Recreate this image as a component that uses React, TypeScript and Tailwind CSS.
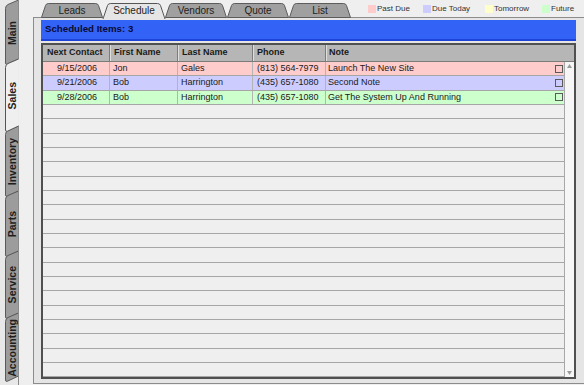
import React from "react";

type Row = {
  date: string;
  first: string;
  last: string;
  phone: string;
  note: string;
  bg: string;
};

const rows: Row[] = [
  { date: "9/15/2006", first: "Jon", last: "Gales", phone: "(813) 564-7979", note: "Launch The New Site", bg: "bg-[#ffcccc]" },
  { date: "9/21/2006", first: "Bob", last: "Harrington", phone: "(435) 657-1080", note: "Second Note", bg: "bg-[#ccccff]" },
  { date: "9/28/2006", first: "Bob", last: "Harrington", phone: "(435) 657-1080", note: "Get The System Up And Running", bg: "bg-[#ccffcc]" },
];

const EMPTY_ROWS = 19;

// left side tabs: boundaries on the y axis
const sideTabs = ["Main", "Sales", "Inventory", "Parts", "Service", "Accounting"];
const bounds = [3, 62, 129, 194, 254, 316, 379];
const SELECTED_SIDE = 1;

const topTabs = ["Leads", "Schedule", "Vendors", "Quote", "List"];
const SELECTED_TOP = 1;

const legend = [
  { label: "Past Due", color: "bg-[#ffcccc]", w: "w-[55px]" },
  { label: "Due Today", color: "bg-[#ccccff]", w: "w-[62px]" },
  { label: "Tomorrow", color: "bg-[#ffffcc]", w: "w-[57px]" },
  { label: "Future", color: "bg-[#ccffcc]", w: "w-[40px]" },
];

function sidePath(a: number, c: number, closed: boolean) {
  const p = `M18.5,${a - 3} L8,${a + 1.5} Q5.5,${a + 2.7} 5.5,${a + 5.5} L5.5,${c + 1} Q5.5,${c + 3} 7.5,${c + 2.2} L18.5,${c - 3}`;
  return closed ? p + " Z" : p;
}

function SideTabs() {
  const selA = bounds[SELECTED_SIDE];
  const selC = bounds[SELECTED_SIDE + 1];
  return (
    <div className="relative w-[19px] shrink-0 h-full">
      <svg className="absolute inset-0" width="19" height="385" viewBox="0 0 19 385">
        {sideTabs.map((_, i) =>
          i === SELECTED_SIDE ? null : (
            <path key={i} d={sidePath(bounds[i], bounds[i + 1], true)} fill="#9c9c9c" stroke="#5a5a5a" strokeWidth="1" />
          )
        )}
        <line x1="18.5" y1="0" x2="18.5" y2={selA - 3} stroke="#8a8a8a" />
        <line x1="18.5" y1={selC - 3} x2="18.5" y2="385" stroke="#8a8a8a" />
        <path d={sidePath(selA, selC, false)} fill="#efefef" stroke="#555" strokeWidth="1" />
      </svg>
      <div className="relative flex flex-col pt-[3px] pl-[5px]">
        {sideTabs.map((t, i) => (
          <div
            key={t}
            style={{ height: bounds[i + 1] - bounds[i] }}
            className="flex w-[14px] items-center justify-center"
          >
            <span className="[writing-mode:vertical-rl] rotate-180 text-[10.5px] font-bold leading-[12px] text-[#1e1e1e]">
              {t}
            </span>
          </div>
        ))}
      </div>
    </div>
  );
}

function TopTab({ label, selected }: { label: string; selected: boolean }) {
  return (
    <div className="relative h-[14px] w-[62px] shrink-0">
      <svg className="absolute left-0 top-0 overflow-visible" width="62" height="16" viewBox="0 0 62 16">
        {selected ? (
          <path
            d="M0,16 L0.5,14.5 L4.5,2.5 Q5.2,0.5 7.5,0.5 L54.5,0.5 Q56.8,0.5 57.5,2.5 L61.5,14.5 L62,16"
            fill="#e5e5e5"
            stroke="#555"
          />
        ) : (
          <path
            d="M0.5,14.5 L4.5,2.5 Q5.2,0.5 7.5,0.5 L54.5,0.5 Q56.8,0.5 57.5,2.5 L61.5,14.5 Z"
            fill="#a0a0a0"
            stroke="#5c5c5c"
          />
        )}
      </svg>
      <div className="relative flex h-full items-center justify-center pt-[1px] text-[10px] leading-[14px] text-[#1e1e1e]">
        {label}
      </div>
    </div>
  );
}

function Scrollbar() {
  return (
    <div className="flex w-[10px] shrink-0 flex-col items-center justify-between border-l border-[#a8a8a8] bg-[#f6f6f6] py-[2px]">
      <svg width="5" height="4" viewBox="0 0 5 4">
        <path d="M0,4 L2.5,0 L5,4 Z" fill="#9a9a9a" />
      </svg>
      <svg width="5" height="4" viewBox="0 0 5 4">
        <path d="M0,0 L5,0 L2.5,4 Z" fill="#9a9a9a" />
      </svg>
    </div>
  );
}

function Table() {
  return (
    <div className="mt-[2px] flex h-[336px] flex-col border-2 border-[#505050] bg-[#efefef] text-[9px] text-[#1a1a1a]">
      <div className="flex h-[17px] shrink-0 border-b border-[#7a7a7a] bg-[#b6b6b6] font-bold">
        <div className="flex w-[67px] items-center border-r border-[#7c7c7c] pl-[4px]">Next Contact</div>
        <div className="flex w-[68px] items-center border-r border-[#7c7c7c] pl-[4px] shadow-[inset_1px_0_0_#dedede]">First Name</div>
        <div className="flex w-[75px] items-center border-r border-[#7c7c7c] pl-[4px] shadow-[inset_1px_0_0_#dedede]">Last Name</div>
        <div className="flex w-[73px] items-center border-r border-[#7c7c7c] pl-[4px] shadow-[inset_1px_0_0_#dedede]">Phone</div>
        <div className="flex flex-1 items-center pl-[3px] shadow-[inset_1px_0_0_#dedede]">Note</div>
      </div>
      <div className="flex min-h-0 flex-1">
        <div className="flex min-w-0 flex-1 flex-col overflow-hidden">
          {rows.map((r, i) => (
            <div key={i} className={`flex h-[14.33px] shrink-0 border-b border-[#a6a6a6] ${r.bg}`}>
              <div className="flex w-[67px] items-center justify-center border-r border-[#b4b4b4] pl-[2px]">{r.date}</div>
              <div className="flex w-[68px] items-center border-r border-[#b4b4b4] pl-[3px]">{r.first}</div>
              <div className="flex w-[75px] items-center border-r border-[#b4b4b4] pl-[3px]">{r.last}</div>
              <div className="flex w-[73px] items-center border-r border-[#b4b4b4] pl-[4px]">{r.phone}</div>
              <div className="flex flex-1 items-center pl-[2px]">
                <span className="flex-1">{r.note}</span>
                <span className="mr-[1px] h-[8px] w-[8px] border border-[#5a5a5a]" />
              </div>
            </div>
          ))}
          {Array.from({ length: EMPTY_ROWS }).map((_, i) => (
            <div key={i} className="h-[14.33px] shrink-0 border-b border-[#a6a6a6]" />
          ))}
        </div>
        <Scrollbar />
      </div>
    </div>
  );
}

export default function App() {
  return (
    <div className="flex h-[385px] w-[584px] overflow-hidden bg-[#e8e8e8] font-['Liberation_Sans',Arial,sans-serif]">
      <SideTabs />
      <div className="flex min-w-0 flex-1 flex-col bg-[#efefef]">
        <div className="relative z-10 flex h-[17px] shrink-0 items-end pl-[22px]">
          {topTabs.map((t, i) => (
            <TopTab key={t} label={t} selected={i === SELECTED_TOP} />
          ))}
          <div className="ml-[17px] flex h-full items-center pt-[1px]">
            {legend.map((l) => (
              <div key={l.label} className={`flex items-center gap-[1px] ${l.w}`}>
                <span className={`h-[8px] w-[8px] shrink-0 ${l.color}`} />
                <span className="text-[8px] leading-[10px] text-[#333]">{l.label}</span>
              </div>
            ))}
          </div>
        </div>
        <div className="ml-[14px] flex h-[367px] flex-col border-y border-l border-[#8c8c8c] bg-[#e5e5e5] pl-[7px] pr-[8px] pt-[2px]">
          <div className="flex h-[21px] shrink-0 items-center border-b-2 border-[#1d44d6] bg-[#3363f6] pl-[4px] text-[9.7px] font-bold text-[#0a0a33]">
            Scheduled Items: 3
          </div>
          <Table />
        </div>
      </div>
    </div>
  );
}
